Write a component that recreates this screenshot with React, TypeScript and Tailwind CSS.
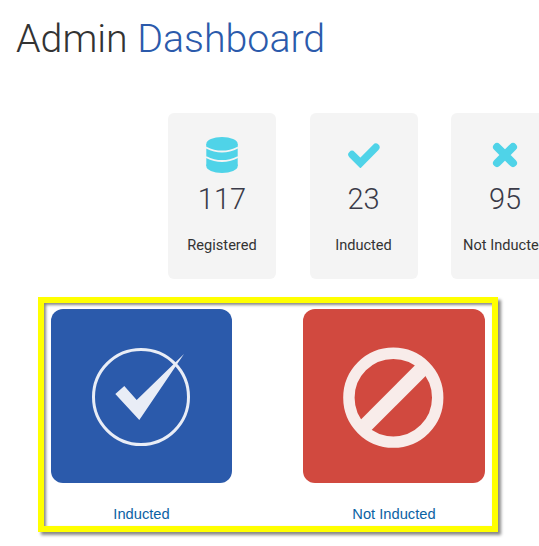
import type { ReactNode } from 'react';

function DatabaseIcon() {
  return (
    <svg viewBox="0 0 32 36" width={32} height={36} fill="currentColor">
      <ellipse cx="16" cy="7" rx="15.7" ry="7" />
      <rect x="0.3" y="7" width="31.4" height="22" />
      <ellipse cx="16" cy="29" rx="15.7" ry="7" />
      <path d="M0 10.5 Q16 18.5 32 10.5" fill="none" stroke="#f4f4f4" strokeWidth="1.8" />
      <path d="M0 20 Q16 28 32 20" fill="none" stroke="#f4f4f4" strokeWidth="1.8" />
    </svg>
  );
}

function CheckIcon() {
  return (
    <svg viewBox="0 0 32 26" width={32} height={26} fill="none" stroke="currentColor" strokeWidth="7.5" strokeLinejoin="miter" strokeLinecap="round">
      <path d="M4 12.6 L12.4 21 L27.8 5.3" />
    </svg>
  );
}

function CrossIcon() {
  return (
    <svg viewBox="0 0 26 26" width={26} height={26} fill="none" stroke="currentColor" strokeWidth="8" strokeLinecap="round">
      <path d="M5 5 L21 21 M21 5 L5 21" />
    </svg>
  );
}

const stats: { value: number; label: string; icon: ReactNode }[] = [
  { value: 117, label: 'Registered', icon: <DatabaseIcon /> },
  { value: 23, label: 'Inducted', icon: <CheckIcon /> },
  { value: 95, label: 'Not Inducted', icon: <CrossIcon /> },
];

function StatCard({ value, label, icon }: { value: number; label: string; icon: ReactNode }) {
  return (
    <div className="w-[108px] h-[166px] shrink-0 rounded-[6px] bg-[#f4f4f4] flex flex-col items-center">
      <div className="h-[38px] mt-[23px] flex items-center justify-center text-[#4fd3e8]">{icon}</div>
      <div className="mt-[7px] h-[36px] leading-[36px] text-[29px] font-light text-[#3a3a48]">{value}</div>
      <div className="mt-[18px] text-[14.6px] leading-[20px] whitespace-nowrap text-[#333]">{label}</div>
    </div>
  );
}

export default function App() {
  return (
    <div className="w-[539px] h-[546px] overflow-hidden bg-white font-['Roboto',sans-serif]">
      <h1 className="pl-[16px] pt-[16px] text-[39.3px] leading-[46px] font-light text-[#333]">
        Admin <span className="text-[#2b5aab]">Dashboard</span>
      </h1>

      <div className="mt-[51px] ml-[168px] flex gap-[33.5px]">
        {stats.map((s) => (
          <StatCard key={s.label} {...s} />
        ))}
      </div>

      <div className="mt-[18px] ml-[38px] w-[460px] h-[235px] border-[6px] border-[#ffff00] shadow-[3px_3px_3px_#888,inset_2px_2px_3px_#888] pt-[6px] pl-[7px] flex gap-[71px]">
        <div className="w-[181px]">
          <div className="h-[174px] rounded-[12px] bg-[#2b5aab]">
            <svg viewBox="0 0 181 174" className="w-full h-full">
              <circle cx="90" cy="88" r="47.5" fill="none" stroke="#e9edf6" strokeWidth="3" />
              <polygon points="64.3,85 73.3,77 85.7,91 133,45 88.3,111" fill="#e9edf6" />
            </svg>
          </div>
          <div className="mt-[21px] text-center text-[14.7px] leading-[20px] text-[#0b62a4] font-['Liberation_Sans',sans-serif]">Inducted</div>
        </div>
        <div className="w-[182px]">
          <div className="h-[174px] rounded-[12px] bg-[#d1493f]">
            <svg viewBox="0 0 182 174" className="w-full h-full">
              <circle cx="90.3" cy="88.7" r="44.4" fill="none" stroke="#f8ecea" strokeWidth="11.4" />
              <line x1="59" y1="120" x2="121.6" y2="57.4" stroke="#f8ecea" strokeWidth="15" />
            </svg>
          </div>
          <div className="mt-[21px] text-center text-[14.7px] leading-[20px] text-[#0b62a4] font-['Liberation_Sans',sans-serif]">Not Inducted</div>
        </div>
      </div>
    </div>
  );
}
